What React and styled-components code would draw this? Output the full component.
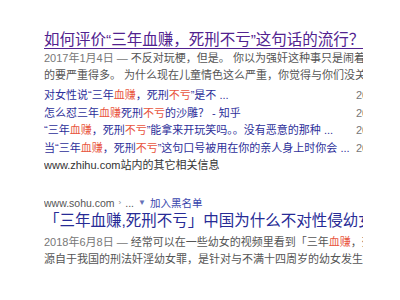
import React from "react";
import styled, { createGlobalStyle } from "styled-components";

const Global = createGlobalStyle`
  html, body { margin: 0; padding: 0; background: #fff; }
  body { font-family: "Liberation Sans", "Noto Sans CJK SC", sans-serif; }
`;

const Page = styled.div`
  width: 400px;
  height: 300px;
  overflow: hidden;
  background: #fff;
  padding: 30px 0 0 44px;
  box-sizing: border-box;
`;

const Column = styled.div`
  width: 319px;
  overflow: hidden;
`;

const Result = styled.div`
  display: flex;
  flex-direction: column;
  margin-top: ${(p) => p.$top || 0}px;
`;

const Title = styled.a`
  display: block;
  font-size: 15.5px;
  line-height: 20px;
  white-space: nowrap;
  color: ${(p) => (p.$visited ? "#52228f" : "#272b96")};
  text-decoration: ${(p) => (p.$visited ? "underline" : "none")};
  text-underline-offset: 3px;
  text-decoration-thickness: 1px;
  cursor: pointer;
`;

const Abstract = styled.div`
  font-size: 11px;
  line-height: 17px;
  color: #555;
  margin-top: ${(p) => p.$top || 0}px;
`;

const Line = styled.div`
  white-space: nowrap;
`;

const DateText = styled.span`
  color: #777;
`;

const Em = styled.span`
  color: #e8553e;
`;

const Related = styled.div`
  display: flex;
  flex-direction: column;
  margin-top: 3px;
  font-size: 11px;
  line-height: 17.5px;
`;

const RelRow = styled.div`
  display: flex;
  white-space: nowrap;
`;

const RelLink = styled.a`
  flex: 0 0 312px;
  color: #2d2f9a;
  text-decoration: none;
`;

const RelDate = styled.span`
  color: #777;
`;

const SiteMore = styled.div`
  color: #333;
  white-space: nowrap;
`;

const UrlLine = styled.div`
  display: flex;
  align-items: center;
  gap: 4px;
  font-size: 10.5px;
  line-height: 16px;
  color: #555;
  white-space: nowrap;
`;

const Arrow = styled.span`
  font-size: 8px;
  color: #888;
`;

const Block = styled.a`
  color: #3846ad;
  text-decoration: none;
  display: flex;
  align-items: center;
  gap: 4px;
`;

const Caret = styled.span`
  font-size: 8px;
  color: #6670b8;
`;

const related = [
  [["对女性说“三年"], ["血赚", 1], ["，死刑"], ["不亏", 1], ["”是不 ..."]],
  [["怎么怼三年"], ["血赚", 1], ["死刑"], ["不亏", 1], ["的沙雕？ - 知乎"]],
  [["“三年"], ["血赚", 1], ["，死刑"], ["不亏", 1], ["”能拿来开玩笑吗。。没有恶意的那种 ..."]],
  [["当“三年"], ["血赚", 1], ["，死刑"], ["不亏", 1], ["”这句口号被用在你的亲人身上时你会 ..."]],
];

export default function App() {
  return (
    <>
      <Global />
      <Page>
        <Column>
          <Result>
            <Title $visited>如何评价“三年血赚，死刑不亏”这句话的流行？</Title>
            <Abstract>
              <Line>
                <DateText>2017年1月4日 — </DateText>不反对玩梗，但是。 你以为强奸这种事只是闹着玩的，比你想象
              </Line>
              <Line>的要严重得多。 为什么现在儿童情色这么严重，你觉得与你们没关系吗</Line>
            </Abstract>
            <Related>
              {related.map((parts, i) => (
                <RelRow key={i}>
                  <RelLink>
                    {parts.map(([t, e], j) => (e ? <Em key={j}>{t}</Em> : <span key={j}>{t}</span>))}
                  </RelLink>
                  <RelDate>2017年</RelDate>
                </RelRow>
              ))}
              <SiteMore>www.zhihu.com站内的其它相关信息</SiteMore>
            </Related>
          </Result>

          <Result $top={20}>
            <UrlLine>
              <span>www.sohu.com</span>
              <Arrow>›</Arrow>
              <span>...</span>
              <Block>
                <Caret>▼</Caret>加入黑名单
              </Block>
            </UrlLine>
            <Title>「三年血赚,死刑不亏」中国为什么不对性侵幼女者判死刑</Title>
            <Abstract $top={3}>
              <Line>
                <DateText>2018年6月8日 — </DateText>经常可以在一些幼女的视频里看到「三年<Em>血赚</Em>，死刑不亏」
              </Line>
              <Line>源自于我国的刑法奸淫幼女罪，是针对与不满十四周岁的幼女发生性关系</Line>
            </Abstract>
          </Result>
        </Column>
      </Page>
    </>
  );
}
